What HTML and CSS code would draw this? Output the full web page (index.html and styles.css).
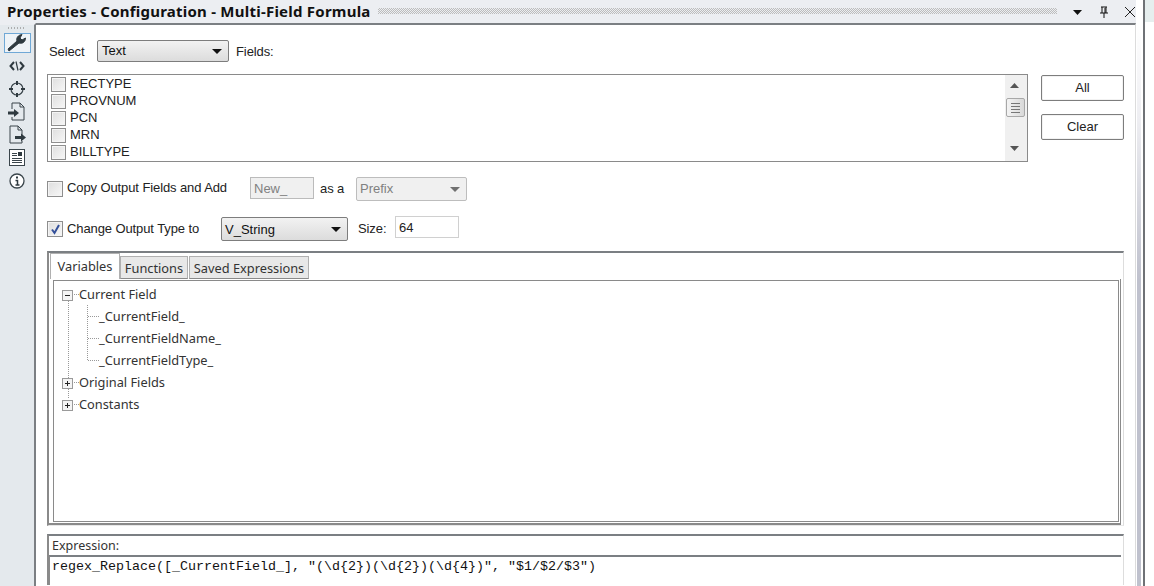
FILE: index.html
```html
<!DOCTYPE html>
<html lang="en">
<head>
<meta charset="utf-8">
<title>Properties</title>
<link rel="stylesheet" href="styles.css">
</head>
<body>
<div class="app">
  <div class="window">
    <header class="titlebar">
      <span class="title">Properties - Configuration - Multi-Field Formula</span>
      <span class="grip"></span>
      <span class="title-icons">
        <svg width="12" height="12" viewBox="0 0 12 12"><path d="M1 4h9L5.500 9z" fill="#111"/></svg>
        <svg width="12" height="12" viewBox="0 0 12 12"><path d="M3 1h6M4 1v6M8 1v6M2 7h8M6 7v5M7 2v5" stroke="#111" fill="none"/></svg>
        <svg width="12" height="12" viewBox="0 0 12 12"><path d="M1 1l10 10M11 1L1 11" stroke="#222" fill="none"/></svg>
      </span>
    </header>
    <div class="body">
      <nav class="sidebar">
        <div class="side-grip"></div>
        <div class="side-btn active">
          <svg width="20" height="18" viewBox="0 0 20 18"><path d="M2 17l-1-2 9-8c-1-3 1-6 5-6.500l-2 3.500 2 2 3.500-2c0 4-3 6-6.500 5z" fill="#2f3a40" stroke="#2f3a40"/></svg>
        </div>
        <div class="side-btn">
          <svg width="16" height="10" viewBox="0 0 16 10"><path d="M5 1L1.500 5 5 9M11 1l3.500 4L11 9" fill="none" stroke="#2f3a40" stroke-width="2"/><path d="M7 0.500l2 9" stroke="#2f3a40" stroke-width="1.200"/></svg>
        </div>
        <div class="side-btn">
          <svg width="18" height="18" viewBox="0 0 18 18"><circle cx="9" cy="9" r="6" fill="none" stroke="#3a454b" stroke-width="1.200"/><path d="M9 1v4M9 13v4M1 9h4M13 9h4" stroke="#2f3a40" stroke-width="2"/></svg>
        </div>
        <div class="side-btn">
          <svg width="18" height="19" viewBox="0 0 18 19"><path d="M4 7V1h8l4 4v13H4v-3M12 1v4h4" fill="none" stroke="#3a454b"/><path d="M0 9.500h6V7l5 4-5 4v-2.500H0z" fill="#2f3a40"/></svg>
        </div>
        <div class="side-btn">
          <svg width="18" height="19" viewBox="0 0 18 19"><path d="M14 11V5l-4-4H2v17h12v-2M10 1v4h4" fill="none" stroke="#3a454b"/><path d="M7 11h6V8.500l5 4-5 4V14H7z" fill="#2f3a40"/></svg>
        </div>
        <div class="side-btn">
          <svg width="16" height="17" viewBox="0 0 16 17"><rect x="0.500" y="0.500" width="15" height="16" fill="#fff" stroke="#3a454b"/><path d="M3 4.500h5M3 6.500h5M3 9.500h10M3 11.500h10M3 13.500h10" stroke="#3a454b"/><rect x="9" y="3" width="4" height="4" fill="#2f3a40"/></svg>
        </div>
        <div class="side-btn">
          <svg width="16" height="16" viewBox="0 0 16 16"><circle cx="8" cy="8" r="7" fill="#fff" stroke="#3a454b" stroke-width="1.300"/><path d="M8 3.500v2" stroke="#2f3a40" stroke-width="2"/><path d="M6.500 7.500H8.500V11.500M6.500 12h4" fill="none" stroke="#2f3a40" stroke-width="1.500"/></svg>
        </div>
      </nav>
      <main class="content">
        <div class="select-row">
          <span class="label select-label">Select</span>
          <span class="dropdown dd-text"><span>Text</span><i class="caret"></i></span>
          <span class="label fields-label">Fields:</span>
        </div>
        <div class="list-row">
          <div class="listbox">
            <ul class="fields">
              <li><span class="check-small"></span>RECTYPE</li>
              <li><span class="check-small"></span>PROVNUM</li>
              <li><span class="check-small"></span>PCN</li>
              <li><span class="check-small"></span>MRN</li>
              <li><span class="check-small"></span>BILLTYPE</li>
            </ul>
            <div class="scrollbar">
              <svg class="arrow" width="9" height="5" viewBox="0 0 9 5"><path d="M0 5h9L4.500 0z" fill="#555"/></svg>
              <div class="thumb"><b></b><b></b><b></b><b></b></div>
              <svg class="arrow arrow-down" width="9" height="5" viewBox="0 0 9 5"><path d="M0 0h9L4.500 5z" fill="#555"/></svg>
            </div>
          </div>
          <div class="side-actions">
            <button class="btn">All</button>
            <button class="btn">Clear</button>
          </div>
        </div>
        <div class="copy-row">
          <span class="checkbox"></span>
          <span class="label cb-label copy-label">Copy Output Fields and Add</span>
          <span class="input input-off">New_</span>
          <span class="label as-label">as a</span>
          <span class="dropdown dd-off"><span>Prefix</span><i class="caret caret-off"></i></span>
        </div>
        <div class="change-row">
          <span class="checkbox checked">
            <svg width="11" height="11" viewBox="0 0 11 11"><path d="M2 5.500l2.500 3.500L9 1" fill="none" stroke="#34509a" stroke-width="2"/></svg>
          </span>
          <span class="label cb-label change-label">Change Output Type to</span>
          <span class="dropdown dd-type"><span>V_String</span><i class="caret"></i></span>
          <span class="label size-label">Size:</span>
          <span class="input input-size">64</span>
        </div>
        <section class="tabpanel">
          <div class="tabs">
            <span class="tab tab-active">Variables</span>
            <span class="tab tab-fn">Functions</span>
            <span class="tab tab-saved">Saved Expressions</span>
          </div>
          <div class="tabpage">
            <div class="treebox">
              <div class="node"><span class="expander">
                <svg width="13" height="13" viewBox="0 0 13 13"><rect x="1.500" y="1.500" width="10" height="10" fill="#f4f4f4" stroke="#9a9a9a"/><path d="M4 6.500h5" stroke="#222"/></svg>
              </span><span class="dots-h"></span>Current Field</div>
              <div class="children">
                <div class="node leaf"><span class="dots-h"></span>_CurrentField_</div>
                <div class="node leaf"><span class="dots-h"></span>_CurrentFieldName_</div>
                <div class="node leaf"><span class="dots-h"></span>_CurrentFieldType_</div>
              </div>
              <div class="node"><span class="expander">
                <svg width="13" height="13" viewBox="0 0 13 13"><rect x="1.500" y="1.500" width="10" height="10" fill="#f4f4f4" stroke="#9a9a9a"/><path d="M4 6.500h5M6.500 4v5" stroke="#222"/></svg>
              </span><span class="dots-h"></span>Original Fields</div>
              <div class="node"><span class="expander">
                <svg width="13" height="13" viewBox="0 0 13 13"><rect x="1.500" y="1.500" width="10" height="10" fill="#f4f4f4" stroke="#9a9a9a"/><path d="M4 6.500h5M6.500 4v5" stroke="#222"/></svg>
              </span><span class="dots-h"></span>Constants</div>
            </div>
          </div>
        </section>
        <section class="expr">
          <div class="expr-label">Expression:</div>
          <div class="expr-box">regex_Replace([_CurrentField_], "(\d{2})(\d{2})(\d{4})", "$1/$2/$3")</div>
        </section>
      </main>
    </div>
  </div>
  <div class="gutter"></div>
  <div class="next-pane"><div class="next-head"></div></div>
</div>
</body>
</html>
```
FILE: styles.css
```css
* { box-sizing: border-box; }
html, body { margin: 0; padding: 0; width: 1154px; height: 586px; overflow: hidden; background: #fff; }
body { font-family: "Liberation Sans", Arial, sans-serif; font-size: 13px; color: #222; }

.app { display: flex; width: 1154px; height: 586px; }
.window { width: 1136px; height: 586px; display: flex; flex-direction: column; }

.titlebar { height: 23px; flex: none; background: #eceef2; display: flex; align-items: center; padding-left: 7px; }
.title { font-family: "Noto Sans", sans-serif; font-weight: 700; font-size: 15px; letter-spacing: 0.23px; color: #111; width: 371px; white-space: nowrap; padding-bottom: 2px; }
.grip { width: 680px; height: 6px; margin-bottom: 1px; background-image: conic-gradient(#bcbcbc 25%, transparent 0 50%, #bcbcbc 0 75%, transparent 0); background-size: 2px 2px; }
.title-icons { display: flex; gap: 14px; margin-left: 15px; }

.body { flex: 1; display: flex; min-height: 0; }
.sidebar { width: 36px; flex: none; background: #e4e9ed; border-right: 2px solid #7b7f83; border-top: 2px solid #eceef2; display: flex; flex-direction: column; align-items: center; }
.side-grip { width: 18px; height: 2px; margin-top: 2px; margin-bottom: 4px; margin-right: 2px; background-image: radial-gradient(#9a9a9a 0.7px, transparent 0.9px); background-size: 3px 2px; }
.side-btn { width: 27px; height: 23px; display: flex; align-items: center; justify-content: center; }
.side-btn.active { height: 20px; margin-bottom: 1px; border: 1px solid #6fa8d6; background: #eef3f7; }

.content { flex: 1; background: #fff; border-top: 2px solid #7b7f83; border-right: 1px solid #dcdcdc; padding-left: 11px; min-width: 0; }

.label { white-space: nowrap; letter-spacing: -0.1px; }
.select-row { display: flex; align-items: center; height: 22px; margin-top: 15px; padding-left: 2px; }
.select-label { width: 48px; }
.fields-label { margin-left: 7px; }

.dropdown { display: flex; align-items: center; justify-content: space-between; border: 1px solid #7d7d7d; border-radius: 2px; background: linear-gradient(#f2f2f2, #dcdcdc); padding: 0 6px 0 4px; color: #111; }
.dd-text { width: 132px; height: 22px; padding-bottom: 2px; }
.dd-type { width: 127px; height: 24px; padding-left: 3px; }
.dd-off { width: 111px; height: 24px; border-color: #bdbdbd; background: #f0f0f0; color: #808080; padding-left: 3px; padding-bottom: 2px; }
.caret { width: 0; height: 0; border-left: 5px solid transparent; border-right: 5px solid transparent; border-top: 5px solid #111; }
.dd-text .caret, .dd-off .caret { margin-top: 2px; }
.caret-off { border-top-color: #707070; }

.list-row { display: flex; margin-top: 12px; }
.listbox { width: 981px; height: 88px; border: 1px solid #8a8a8a; display: flex; overflow: hidden; }
.fields { list-style: none; margin: 0; padding: 1px 0 0 3px; flex: 1; }
.fields li { height: 17px; padding-bottom: 2px; display: flex; align-items: center; color: #222; white-space: nowrap; }
.check-small { width: 15px; height: 15px; flex: none; margin-top: 2px; border: 1px solid #8e8e8e; background: linear-gradient(135deg, #dedede, #f7f7f7); box-shadow: inset 0 0 0 1px #f4f4f4; margin-right: 4px; }
.scrollbar { width: 22px; background: #f0f0f0; display: flex; flex-direction: column; align-items: center; padding: 8px 3px 0 0; }
.arrow { flex: none; }
.arrow-down { margin-top: 29px; }
.thumb { width: 19px; height: 19px; margin-top: 10px; margin-left: 1px; flex: none; border: 1px solid #a8a8a8; border-radius: 2px; background: linear-gradient(90deg, #f4f4f4, #d8d8d8); display: flex; flex-direction: column; align-items: center; justify-content: center; gap: 2px; }
.thumb b { display: block; width: 9px; height: 1px; background: #777; }

.side-actions { display: flex; flex-direction: column; gap: 13px; margin-left: 13px; margin-top: 1px; }
.btn { width: 83px; height: 26px; padding: 0 0 2px; border: 1px solid #7d7d7d; border-radius: 2px; background: #fff; font: 13px "Liberation Sans", Arial, sans-serif; color: #222; box-shadow: inset 0 0 0 1px #f2f2f2; }

.copy-row { display: flex; align-items: center; height: 24px; margin-top: 15px; }
.change-row { display: flex; align-items: center; height: 24px; margin-top: 16px; }
.checkbox { width: 16px; height: 16px; border: 1px solid #8e8e8e; background: linear-gradient(135deg, #dedede, #f7f7f7); box-shadow: inset 0 0 0 1px #f4f4f4; display: flex; align-items: center; justify-content: center; flex: none; }
.cb-label { margin-left: 4px; }
.copy-label { width: 183px; padding-bottom: 4px; }
.change-label { width: 154px; padding-bottom: 2px; }
.input { display: flex; align-items: center; padding-left: 3px; border: 1px solid #d0d0d0; height: 22px; align-self: flex-start; }
.input-off { width: 64px; background: #f0f0f0; color: #808080; border-color: #bbb; }
.as-label { margin-left: 6px; width: 36px; padding-bottom: 2px; }
.size-label { margin-left: 10px; width: 37px; padding-bottom: 2px; }
.input-size { width: 64px; margin-top: -1px; }

.tabpanel { width: 1077px; height: 275px; margin-top: 10px; border-top: 2px solid #7b7f83; border-left: 2px solid #8a8a8a; border-right: 1px solid #ddd; border-bottom: 1px solid #e8e8e8; display: flex; flex-direction: column; }
.tabs { display: flex; height: 26px; flex: none; padding-left: 1px; align-items: flex-end; font-family: "Noto Sans", sans-serif; font-size: 12.800px; }
.tab { height: 23px; line-height: 22px; margin-right: 1px; background: #e8e8e8; border: 1px solid #b0b0b0; border-bottom: 1px solid #8a8a8a; color: #333; white-space: nowrap; text-align: center; }
.tab-fn { width: 68px; }
.tab-saved { width: 120px; }
.tab-active { height: 26px; line-height: 25px; width: 70px; background: #fff; border-bottom: 0; margin-right: 0; }

.tabpage { width: 1072px; height: 246px; flex: none; padding: 1px 0 0 4px; border-right: 1px solid #8a8a8a; border-bottom: 2px solid #8a8a8a; }
.treebox { width: 1066px; height: 242px; border: 1px solid #8a8a8a; padding: 2px 0 0 7px; font-family: "Noto Sans", sans-serif; font-size: 12.800px; color: #333; background-image: repeating-linear-gradient(#999 0 1px, transparent 1px 2px); background-repeat: no-repeat; background-position: 14px 18px; background-size: 1px 100px; }
.node { height: 22px; display: flex; align-items: center; white-space: nowrap; }
.expander { width: 13px; height: 13px; flex: none; }
.dots-h { width: 5px; height: 1px; flex: none; background-image: linear-gradient(90deg, #999 50%, transparent 50%); background-size: 2px 1px; }
.children { margin-left: 26px; padding-left: 1px; background-image: repeating-linear-gradient(#999 0 1px, transparent 1px 2px); background-repeat: no-repeat; background-size: 1px 55px; }
.leaf .dots-h { width: 11px; }

.expr { flex: 1; width: 1077px; margin-top: 8px; border-top: 2px solid #7b7f83; border-left: 2px solid #8a8a8a; border-right: 1px solid #ddd; min-height: 0; }
.expr-label { height: 19px; line-height: 19px; padding-left: 3px; font-family: "Noto Sans", sans-serif; font-size: 12.500px; color: #333; }
.expr-box { width: 1072px; height: 30px; border-top: 2px solid #7b7f83; border-left: 1px solid #8a8a8a; padding: 1px 0 0 2px; font-family: "Liberation Mono", monospace; font-size: 13.330px; line-height: 18px; color: #111; white-space: nowrap; }

.gutter { width: 7px; flex: none; background-image: linear-gradient(#fff 23px, #eeeef2 120px, #bfc1cd 280px); background-repeat: no-repeat; background-size: 4px 100%; background-position: 1px 0; }
.next-pane { flex: 1; border-left: 2px solid #6f7276; }
.next-head { height: 22px; background: #e6eeee; }
```
